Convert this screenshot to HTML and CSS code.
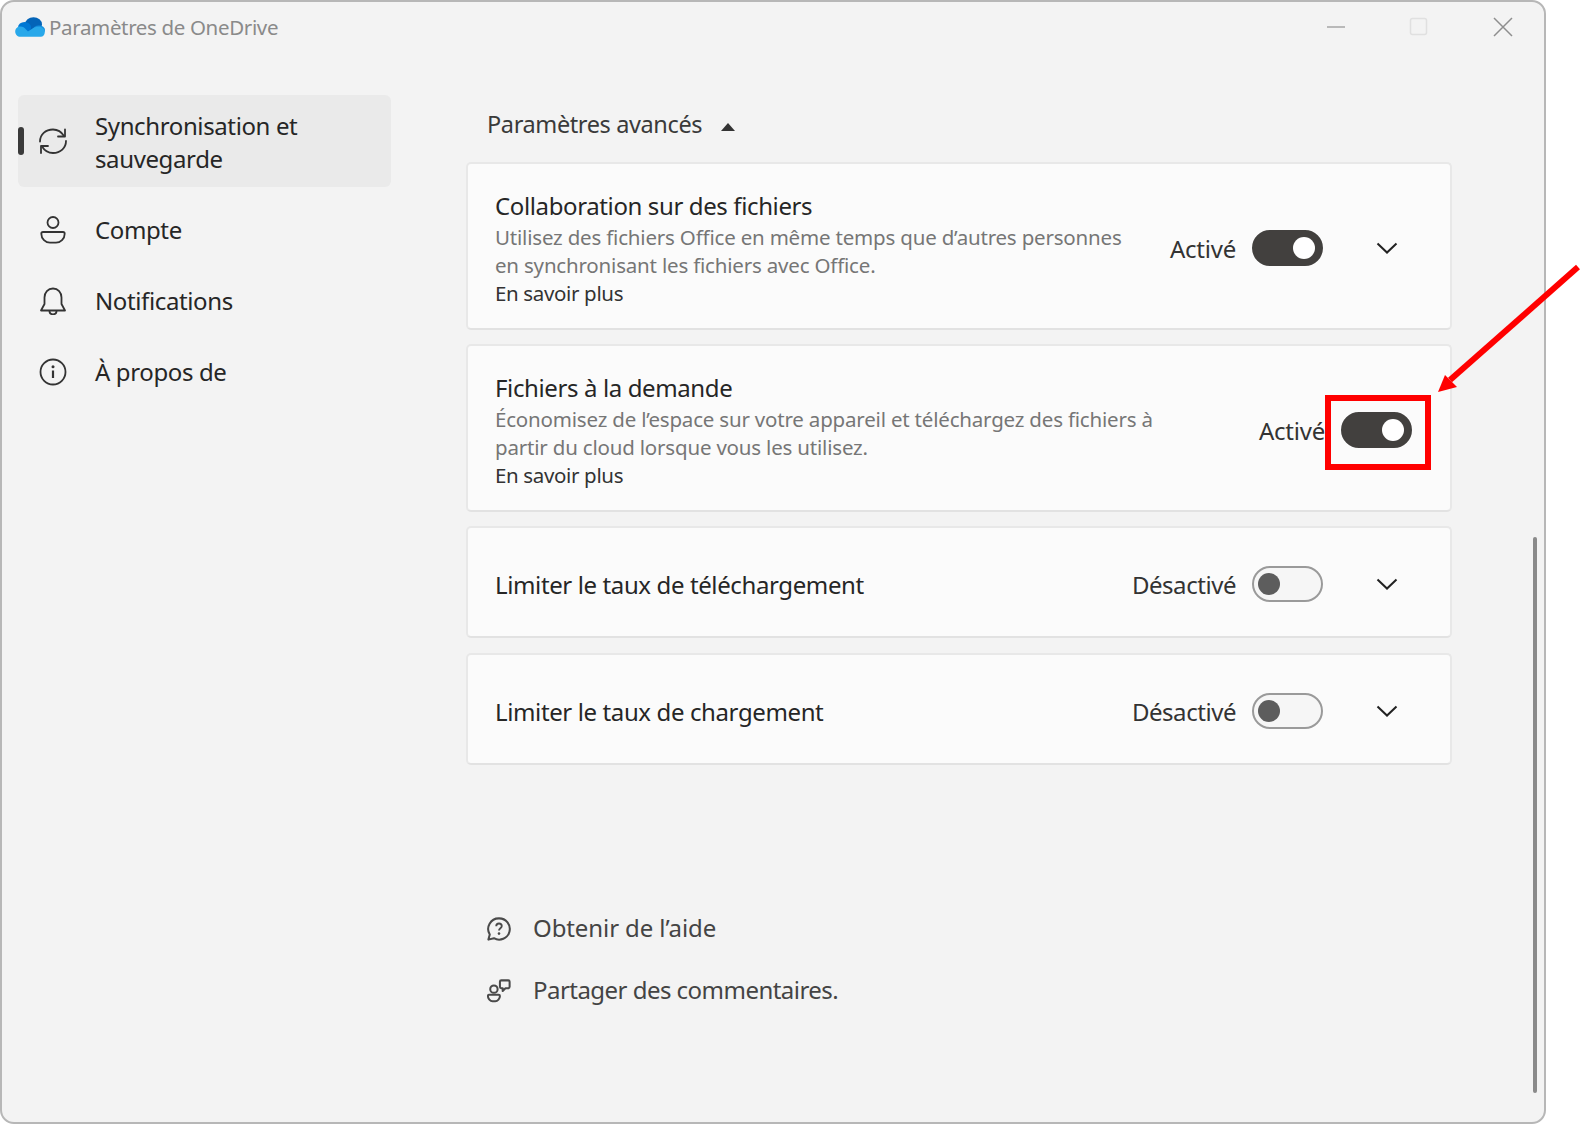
FILE: index.html
```html
<!DOCTYPE html>
<html lang="fr">
<head>
<meta charset="utf-8">
<title>Paramètres de OneDrive</title>
<link rel="stylesheet" href="styles.css">
</head>
<body>
<div class="window">
  <header class="titlebar">
    <svg class="logo" viewBox="0 0 30 20" width="30" height="20">
      <ellipse cx="18.500" cy="7.500" rx="8.500" ry="7.300" fill="#0364b8"/>
      <ellipse cx="9.500" cy="10.500" rx="6.500" ry="5.500" fill="#0078d4"/>
      <ellipse cx="24" cy="13" rx="6" ry="4.500" fill="#1490df"/>
      <path fill="#28a8ea" d="M5.500 9.500C8 9.500 9.500 10.800 11 12.500l2 2 3-2c2-1.500 4-2.700 7.500-2.700 3.500 0 6.300 2 6.300 5.200 0 2.800-1.800 4.800-4 4.800H5.500C2.500 19.800.2 17.500.2 14.500c0-3 2.300-5 5.300-5z"/>
    </svg>
    <span class="app-title">Paramètres de OneDrive</span>
    <div class="winctl">
      <svg width="20" height="20" viewBox="0 0 20 20"><path d="M2 10h18" stroke="#a6a6a6" stroke-width="1.500"/></svg>
      <svg width="20" height="20" viewBox="0 0 20 20"><rect x="1.500" y="1.500" width="16" height="16" rx="2" fill="none" stroke="#e0e0e0" stroke-width="1.500"/></svg>
      <svg width="20" height="20" viewBox="0 0 20 20"><path d="M1 1l18 18M19 1L1 19" stroke="#8e8e8e" stroke-width="1.500" fill="none"/></svg>
    </div>
  </header>
  <div class="content">
    <nav class="sidebar">
      <a class="nav-item active">
        <svg class="nav-icon" viewBox="0 0 28 28" width="28" height="28" fill="none" stroke="#333" stroke-width="1.800" stroke-linecap="round" stroke-linejoin="round">
          <path d="M1 14.500C1 7.500 6.500 2.500 14 2.500c4.800 0 8.500 2.400 11 6.500"/><path d="M26 2.500v7h-7"/>
          <path d="M27 14c0 7-5.500 12-13 12-4.800 0-8.500-2.400-11-6.500"/><path d="M2 26v-7h7"/>
        </svg>
        <span>Synchronisation et<br>sauvegarde</span>
      </a>
      <a class="nav-item">
        <svg class="nav-icon" viewBox="0 0 28 28" width="28" height="28" fill="none" stroke="#333" stroke-width="1.800">
          <circle cx="14" cy="6.500" r="5.500"/><path d="M4 16h20c1.200 0 1.700.7 1.700 1.700 0 5-4.200 9-8.700 9h-6c-4.500 0-8.700-4-8.700-9 0-1 .5-1.700 1.700-1.700z"/>
        </svg>
        <span>Compte</span>
      </a>
      <a class="nav-item">
        <svg class="nav-icon" viewBox="0 0 28 28" width="28" height="28" fill="none" stroke="#333" stroke-width="1.800" stroke-linejoin="round">
          <path d="M14 1.500c-5 0-8.500 4-8.500 9v6.500L2 23.500h24L22.500 17v-6.500c0-5-3.500-9-8.500-9z"/><path d="M10.500 24c0 2 1.500 3.300 3.500 3.300s3.500-1.300 3.500-3.300"/>
        </svg>
        <span>Notifications</span>
      </a>
      <a class="nav-item">
        <svg class="nav-icon" viewBox="0 0 28 28" width="28" height="28" fill="none" stroke="#333" stroke-width="1.800">
          <circle cx="14" cy="14" r="12.500"/><path d="M14 12.500v7.500" stroke-width="2.200"/><circle cx="14" cy="8.700" r="1.500" fill="#333" stroke="none"/>
        </svg>
        <span>À propos de</span>
      </a>
    </nav>
    <main class="main">
      <div class="section-head">
        <span>Paramètres avancés</span>
        <svg width="16" height="10" viewBox="0 0 16 10"><path d="M8 1l7 8H1z" fill="#333"/></svg>
      </div>
      <section class="card tall">
        <div class="card-text">
          <div class="card-title">Collaboration sur des fichiers</div>
          <div class="card-desc">Utilisez des fichiers Office en même temps que d’autres personnes<br>en synchronisant les fichiers avec Office.</div>
          <div class="card-link">En savoir plus</div>
        </div>
        <span class="state state-on">Activé</span>
        <span class="toggle on"><i></i></span>
        <svg class="chev" width="22" height="12" viewBox="0 0 22 12"><path d="M1.500 1.500L11 10.500l9.500-9" fill="none" stroke="#222" stroke-width="2"/></svg>
      </section>
      <section class="card tall nochev">
        <div class="card-text">
          <div class="card-title">Fichiers à la demande</div>
          <div class="card-desc">Économisez de l’espace sur votre appareil et téléchargez des fichiers à<br>partir du cloud lorsque vous les utilisez.</div>
          <div class="card-link">En savoir plus</div>
        </div>
        <span class="state state-on">Activé</span>
        <span class="toggle on"><i></i></span>
      </section>
      <section class="card short">
        <div class="card-text"><div class="card-title">Limiter le taux de téléchargement</div></div>
        <span class="state">Désactivé</span>
        <span class="toggle"><i></i></span>
        <svg class="chev" width="22" height="12" viewBox="0 0 22 12"><path d="M1.500 1.500L11 10.500l9.500-9" fill="none" stroke="#222" stroke-width="2"/></svg>
      </section>
      <section class="card short">
        <div class="card-text"><div class="card-title">Limiter le taux de chargement</div></div>
        <span class="state">Désactivé</span>
        <span class="toggle"><i></i></span>
        <svg class="chev" width="22" height="12" viewBox="0 0 22 12"><path d="M1.500 1.500L11 10.500l9.500-9" fill="none" stroke="#222" stroke-width="2"/></svg>
      </section>
      <div class="help">
        <a class="help-row help-aide">
          <svg class="help-icon" width="24" height="24" viewBox="0 0 26 26" fill="none" stroke="#4a4a4a" stroke-width="2.200" stroke-linejoin="round">
            <path d="M13 1.500A11.500 11.500 0 1 1 7.500 23L1.500 24.500 3 19A11.500 11.500 0 0 1 13 1.500z"/>
            <path d="M10 10c0-1.800 1.300-3 3-3s3 1.200 3 2.800c0 2.200-3 2.400-3 4.700" stroke-width="2"/><circle cx="13" cy="18" r="1.400" fill="#4a4a4a" stroke="none"/>
          </svg>
          <span>Obtenir de l’aide</span>
        </a>
        <a class="help-row">
          <svg class="help-icon" width="24" height="24" viewBox="0 0 26 26" fill="none" stroke="#4a4a4a" stroke-width="2.200" stroke-linejoin="round">
            <circle cx="7.500" cy="11" r="4"/><path d="M2.500 17h10c1 0 1.500.6 1.500 1.400 0 3-2.500 5.600-5 5.600H6c-2.500 0-5-2.600-5-5.600 0-.8.500-1.400 1.500-1.400z"/>
            <path d="M15.500 1.500h7.500c1 0 1.500.5 1.500 1.500v5.500c0 1-.5 1.500-1.500 1.500h-3l-3 3V10h-1.500c-1 0-1.500-.5-1.500-1.500V3c0-1 .5-1.500 1.500-1.500z"/>
          </svg>
          <span>Partager des commentaires.</span>
        </a>
      </div>
    </main>
  </div>
  <div class="scrollbar"></div>
</div>
<div class="callout-box"></div>
<svg class="callout-arrow" width="150" height="135" viewBox="0 0 150 135">
  <path d="M140 7L12 120" stroke="#f00" stroke-width="6" fill="none"/>
  <path d="M0 132L7 115 19 127z" fill="#f00"/>
</svg>
</body>
</html>
```
FILE: styles.css
```css
* { box-sizing: border-box; }
html, body { margin: 0; height: 100%; background: #fff; overflow: hidden; }
body { font-family: "Noto Sans", "Open Sans", sans-serif; color: #262626; position: relative; }

.window {
  position: relative;
  width: 1546px;
  height: 1124px;
  background: #f3f3f3;
  border: 2px solid #b7b7b7;
  border-radius: 14px;
  display: flex;
  flex-direction: column;
}

.titlebar {
  height: 50px;
  flex: none;
  display: flex;
  align-items: center;
  padding-left: 13px;
}
.logo { flex: none; }
.app-title { margin-left: 4px; font-size: 20.500px; letter-spacing: -.35px; color: #8a8a8a; }
.winctl { margin-left: auto; display: flex; gap: 64px; padding-right: 31px; }

.content { flex: 1; display: flex; min-height: 0; }

.sidebar {
  width: 464px;
  flex: none;
  padding: 43px 0 0 16px;
  display: flex;
  flex-direction: column;
  gap: 1px;
}
.nav-item {
  position: relative;
  width: 373px;
  height: 70px;
  display: flex;
  align-items: center;
  gap: 28px;
  padding-left: 21px;
  font-size: 24px;
  line-height: 33px;
  letter-spacing: -.38px;
  color: #262626;
  border-radius: 6px;
}
.nav-item span { margin-bottom: 2px; }
.nav-item.active span { margin: 2px 0 0; }
.nav-item.active {
  height: 92px;
  margin-bottom: 7px;
  background: #eaeaea;
}
.nav-item.active::before {
  content: "";
  position: absolute;
  left: 0;
  top: 32px;
  width: 6px;
  height: 28px;
  border-radius: 3px;
  background: #3a3a3a;
}
.nav-icon { flex: none; }

.main { flex: 1; }
.section-head {
  height: 110px;
  padding: 56px 0 0 21px;
  display: flex;
  align-items: flex-start;
  gap: 18px;
  font-size: 23.500px;
  line-height: 32px;
  letter-spacing: -.38px;
  color: #3a3a3a;
}
.section-head svg { margin-top: 14px; }

.card {
  width: 986px;
  display: flex;
  align-items: center;
  padding: 4px 52px 0 27px;
  background: #fbfbfb;
  border: 2px solid #e8e8e8;
  border-bottom-color: #e2e2e2;
  border-radius: 5px;
  margin-bottom: 15px;
}
.card.tall { height: 168px; margin-bottom: 14px; }
.card.short { height: 112px; }
.card.nochev { padding-right: 38px; }

.card-text { flex: 1; min-width: 0; padding-top: 1px; }
.card-title { font-size: 24px; line-height: 32px; letter-spacing: -.38px; color: #262626; }
.tall .card-title { margin-bottom: 2px; }
.card-desc { font-size: 20.500px; line-height: 27.500px; letter-spacing: -.19px; color: #767676; }
.card-link { font-size: 20.500px; line-height: 28px; letter-spacing: -.35px; color: #333; }

.state { font-size: 24px; letter-spacing: -.45px; color: #333; margin-right: 16px; }
.state-on { letter-spacing: -.22px; }

.toggle {
  flex: none;
  width: 71px;
  height: 36px;
  border-radius: 18px;
  display: flex;
  align-items: center;
  padding: 0 6px 0 4px;
  background: #f6f6f6;
  border: 2px solid #9a9a9a;
}
.toggle i { width: 22px; height: 22px; border-radius: 50%; background: #5d5d5d; }
.toggle.on { background: #42403e; border-color: #42403e; justify-content: flex-end; }
.toggle.on i { background: #fff; }
.chev { flex: none; margin-left: 53px; }

.help { margin-top: 143px; padding-left: 21px; display: flex; flex-direction: column; gap: 24px; }
.help-row { display: flex; align-items: center; gap: 21px; height: 38px; font-size: 24px; letter-spacing: -.53px; color: #444; }
.help-aide { letter-spacing: -.1px; }
.help-icon { flex: none; margin: 3px 1px 0 0; }

.scrollbar {
  position: absolute;
  right: 7px;
  top: 535px;
  width: 4px;
  height: 556px;
  border-radius: 2px;
  background: #8a8a8a;
}

.callout-box {
  position: absolute;
  left: 1325px;
  top: 395px;
  width: 106px;
  height: 75px;
  border: 6px solid #f00;
}
.callout-arrow { position: absolute; left: 1438px; top: 260px; overflow: visible; }
```
